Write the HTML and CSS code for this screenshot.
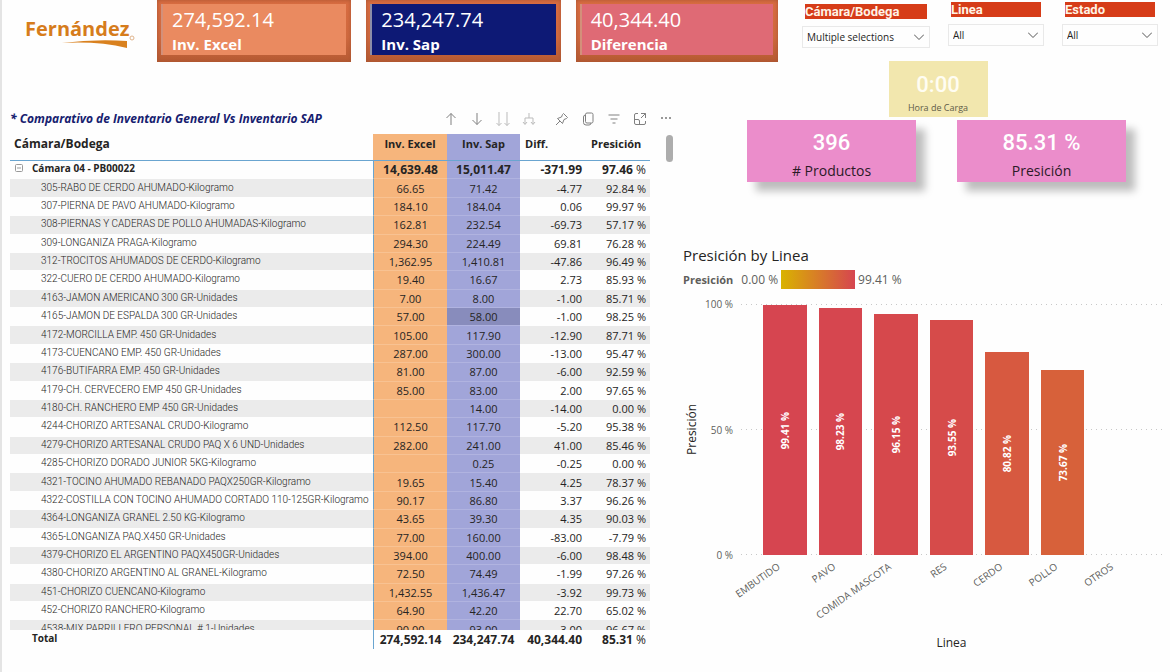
FILE: index.html
```html
<!DOCTYPE html>
<html lang="es">
<head>
<meta charset="utf-8">
<title>Comparativo de Inventario</title>
<link rel="stylesheet" href="styles.css">
</head>
<body>
<div class="report">
  <header class="top">
    <div class="logo">
      <span class="logo-name">Fernández</span>
      <svg class="logo-swoosh" viewBox="0 0 72 8" aria-hidden="true"><path d="M0 3Q32-1 65 1V8Q36 1 0 3Z" fill="#d9811f"/><circle cx="70" cy="-2" r="2" fill="none" stroke="#e0b48c"/></svg>
    </div>
    <div class="kpis">
      <section class="kpi kpi-excel"><div class="kpi-face"><span class="kpi-value">274,592.14</span><span class="kpi-label">Inv. Excel</span></div></section>
      <section class="kpi kpi-sap"><div class="kpi-face"><span class="kpi-value">234,247.74</span><span class="kpi-label">Inv. Sap</span></div></section>
      <section class="kpi kpi-diff"><div class="kpi-face"><span class="kpi-value">40,344.40</span><span class="kpi-label">Diferencia</span></div></section>
    </div>
    <div class="slicers">
      <div class="slicer slicer-wide">
        <label for="camara">Cámara/Bodega</label>
        <div class="drop"><select id="camara"><option>Multiple selections</option></select><svg viewBox="0 0 10 6" aria-hidden="true"><path d="M0 .5L5 5.5L10 .5"/></svg></div>
      </div>
      <div class="slicer">
        <label for="linea">Linea</label>
        <div class="drop"><select id="linea"><option>All</option></select><svg viewBox="0 0 10 6" aria-hidden="true"><path d="M0 .5L5 5.5L10 .5"/></svg></div>
      </div>
      <div class="slicer">
        <label for="estado">Estado</label>
        <div class="drop"><select id="estado"><option>All</option></select><svg viewBox="0 0 10 6" aria-hidden="true"><path d="M0 .5L5 5.5L10 .5"/></svg></div>
      </div>
    </div>
  </header>

  <main class="panes">
    <section class="matrix">
      <div class="matrix-head">
        <h1>* Comparativo de Inventario General Vs Inventario SAP</h1>
        <div class="tools">
          <button aria-label="Subir nivel"><svg viewBox="0 0 14 14"><path d="M7 13V1.500M2.500 6L7 1.500L11.500 6"/></svg></button>
          <button aria-label="Bajar nivel"><svg viewBox="0 0 14 14"><path d="M7 1V12.500M2.500 8L7 12.500L11.500 8"/></svg></button>
          <button class="off" aria-label="Siguiente nivel"><svg viewBox="0 0 14 14"><path d="M3 0V13.500M.5 11L3 13.500L5.500 11M11 0V13.500M8.500 11L11 13.500L13.500 11"/></svg></button>
          <button class="off" aria-label="Expandir nivel"><svg viewBox="0 0 14 14"><path d="M7 1V6M3 12V6H11V12M1 10L3 12.500L5 10M9 10L11 12.500L13 10"/></svg></button>
          <button class="gap" aria-label="Anclar"><svg viewBox="0 0 14 14"><path d="M8.500 1.500L12.500 5.500L11.500 6.500L9 7.500L7.500 11.500L2.500 6.500L6.500 5L7.500 2.500ZM5 9L1 13"/></svg></button>
          <button aria-label="Copiar"><svg viewBox="0 0 14 14"><rect x="4.500" y="1" width="7.500" height="10" rx="1.500"/><path d="M4.500 3Q2.500 3 2.500 5V10.500Q2.500 13 5 13H8Q10 13 10 11"/></svg></button>
          <button aria-label="Filtros"><svg viewBox="0 0 14 14"><path d="M1.500 3H12.500M3.500 7H10.500M5.500 11H8.500"/></svg></button>
          <button aria-label="Modo de enfoque"><svg viewBox="0 0 14 14"><path d="M5 1.500H3Q1.500 1.500 1.500 3V11Q1.500 12.500 3 12.500H11Q12.500 12.500 12.500 11V9M8 1.500H12.500V6M12.500 1.500L8 6M1.500 7.500H5Q6.500 7.500 6.500 9V12.500"/></svg></button>
          <button class="more" aria-label="Más opciones"><svg viewBox="0 0 14 14"><circle cx="3" cy="6" r="1"/><circle cx="7" cy="6" r="1"/><circle cx="11" cy="6" r="1"/></svg></button>
        </div>
      </div>
      <div class="matrix-body">
        <div class="scroller">
          <table>
            <colgroup><col><col class="c-excel"><col class="c-sap"><col class="c-diff"><col class="c-pres"></colgroup>
            <thead><tr><th>Cámara/Bodega</th><th>Inv. Excel</th><th>Inv. Sap</th><th>Diff.</th><th>Presición</th></tr></thead>
            <tbody>
              <tr class="group"><th><button class="toggle" aria-label="Contraer"><svg viewBox="0 0 8 8"><rect x=".5" y=".5" width="7" height="7" rx="1"/><path d="M2 4H6"/></svg></button>Cámara 04 - PB00022</th><td>14,639.48</td><td>15,011.47</td><td>-371.99</td><td>97.46 <i>%</i></td></tr>
              <tr><th>305-RABO DE CERDO AHUMADO-Kilogramo</th><td>66.65</td><td>71.42</td><td>-4.77</td><td>92.84 %</td></tr>
              <tr><th>307-PIERNA DE PAVO AHUMADO-Kilogramo</th><td>184.10</td><td>184.04</td><td>0.06</td><td>99.97 %</td></tr>
              <tr><th>308-PIERNAS Y CADERAS DE POLLO AHUMADAS-Kilogramo</th><td>162.81</td><td>232.54</td><td>-69.73</td><td>57.17 %</td></tr>
              <tr><th>309-LONGANIZA PRAGA-Kilogramo</th><td>294.30</td><td>224.49</td><td>69.81</td><td>76.28 %</td></tr>
              <tr><th>312-TROCITOS AHUMADOS DE CERDO-Kilogramo</th><td>1,362.95</td><td>1,410.81</td><td>-47.86</td><td>96.49 %</td></tr>
              <tr><th>322-CUERO DE CERDO AHUMADO-Kilogramo</th><td>19.40</td><td>16.67</td><td>2.73</td><td>85.93 %</td></tr>
              <tr><th>4163-JAMON AMERICANO 300 GR-Unidades</th><td>7.00</td><td>8.00</td><td>-1.00</td><td>85.71 %</td></tr>
              <tr><th>4165-JAMON DE ESPALDA 300 GR-Unidades</th><td>57.00</td><td class="hover">58.00</td><td>-1.00</td><td>98.25 %</td></tr>
              <tr><th>4172-MORCILLA EMP. 450 GR-Unidades</th><td>105.00</td><td>117.90</td><td>-12.90</td><td>87.71 %</td></tr>
              <tr><th>4173-CUENCANO EMP. 450 GR-Unidades</th><td>287.00</td><td>300.00</td><td>-13.00</td><td>95.47 %</td></tr>
              <tr><th>4176-BUTIFARRA EMP. 450 GR-Unidades</th><td>81.00</td><td>87.00</td><td>-6.00</td><td>92.59 %</td></tr>
              <tr><th>4179-CH. CERVECERO EMP 450 GR-Unidades</th><td>85.00</td><td>83.00</td><td>2.00</td><td>97.65 %</td></tr>
              <tr><th>4180-CH. RANCHERO EMP 450 GR-Unidades</th><td></td><td>14.00</td><td>-14.00</td><td>0.00 %</td></tr>
              <tr><th>4244-CHORIZO ARTESANAL CRUDO-Kilogramo</th><td>112.50</td><td>117.70</td><td>-5.20</td><td>95.38 %</td></tr>
              <tr><th>4279-CHORIZO ARTESANAL CRUDO PAQ X 6 UND-Unidades</th><td>282.00</td><td>241.00</td><td>41.00</td><td>85.46 %</td></tr>
              <tr><th>4285-CHORIZO DORADO JUNIOR 5KG-Kilogramo</th><td></td><td>0.25</td><td>-0.25</td><td>0.00 %</td></tr>
              <tr><th>4321-TOCINO AHUMADO REBANADO PAQX250GR-Kilogramo</th><td>19.65</td><td>15.40</td><td>4.25</td><td>78.37 %</td></tr>
              <tr><th>4322-COSTILLA CON TOCINO AHUMADO CORTADO 110-125GR-Kilogramo</th><td>90.17</td><td>86.80</td><td>3.37</td><td>96.26 %</td></tr>
              <tr><th>4364-LONGANIZA GRANEL 2.50 KG-Kilogramo</th><td>43.65</td><td>39.30</td><td>4.35</td><td>90.03 %</td></tr>
              <tr><th>4365-LONGANIZA PAQ.X450 GR-Unidades</th><td>77.00</td><td>160.00</td><td>-83.00</td><td>-7.79 %</td></tr>
              <tr><th>4379-CHORIZO EL ARGENTINO PAQX450GR-Unidades</th><td>394.00</td><td>400.00</td><td>-6.00</td><td>98.48 %</td></tr>
              <tr><th>4380-CHORIZO ARGENTINO AL GRANEL-Kilogramo</th><td>72.50</td><td>74.49</td><td>-1.99</td><td>97.26 %</td></tr>
              <tr><th>451-CHORIZO CUENCANO-Kilogramo</th><td>1,432.55</td><td>1,436.47</td><td>-3.92</td><td>99.73 %</td></tr>
              <tr><th>452-CHORIZO RANCHERO-Kilogramo</th><td>64.90</td><td>42.20</td><td>22.70</td><td>65.02 %</td></tr>
              <tr><th>4538-MIX PARRILLERO PERSONAL # 1-Unidades</th><td>90.00</td><td>93.00</td><td>-3.00</td><td>96.67 %</td></tr>
            </tbody>
            <tfoot><tr><th>Total</th><td>274,592.14</td><td>234,247.74</td><td>40,344.40</td><td>85.31 <i>%</i></td></tr></tfoot>
          </table>
        </div>
        <div class="track"><div class="thumb"></div></div>
      </div>
    </section>

    <section class="side">
      <div class="clock"><div class="clock-card"><span class="clock-value">0:00</span><span class="clock-label">Hora de Carga</span></div></div>
      <div class="stats">
        <div class="stat"><span class="stat-value">396</span><span class="stat-label"># Productos</span></div>
        <div class="stat"><span class="stat-value">85.31 %</span><span class="stat-label">Presición</span></div>
      </div>
      <figure class="chart">
        <h2>Presición by Linea</h2>
        <div class="legend"><b>Presición</b><span>0.00 %</span><span class="ramp"></span><span>99.41 %</span></div>
        <div class="plot-area">
          <div class="y-title"><span>Presición</span></div>
          <div class="ticks"><span>100 %</span><span>50 %</span><span>0 %</span></div>
          <div class="plot">
            <div class="lines"><span></span><span></span><span></span></div>
            <div class="bars">
              <div class="bar" style="height:99.41%;background:#d64550"><span>99.41 %</span></div>
              <div class="bar" style="height:98.23%;background:#d6464f"><span>98.23 %</span></div>
              <div class="bar" style="height:96.15%;background:#d6484c"><span>96.15 %</span></div>
              <div class="bar" style="height:93.55%;background:#d64b4a"><span>93.55 %</span></div>
              <div class="bar" style="height:80.82%;background:#d75940"><span>80.82 %</span></div>
              <div class="bar" style="height:73.67%;background:#d7613a"><span>73.67 %</span></div>
              <div class="bar" style="height:0%"></div>
            </div>
          </div>
          <div class="cats"><div><span>EMBUTIDO</span></div><div><span>PAVO</span></div><div><span>COMIDA MASCOTA</span></div><div><span>RES</span></div><div><span>CERDO</span></div><div><span>POLLO</span></div><div><span>OTROS</span></div></div>
          <div class="x-title">Linea</div>
        </div>
      </figure>
    </section>
  </main>
</div>
</body>
</html>
```
FILE: styles.css
```css
* { box-sizing: border-box; }
body { margin: 0; background: #fefefe; color: #252423; font-family: "Open Sans", "Noto Sans", sans-serif; font-size: 11px; }
button { border: 0; padding: 0; background: none; }
h1, h2, figure { margin: 0; }
.report { min-height: 100vh; border-left: 2px solid #e4e4e4; }

/* Header */
.top { display: flex; }
.logo { flex: none; width: 155px; padding: 14px 0 0 23px; }
.logo-name { display: block; color: #d67c1c; font: 700 20px/30px "Open Sans", sans-serif; }
.logo-swoosh { display: block; width: 72px; height: 8px; margin: -4px 0 0 37px; overflow: visible; }
.kpis { flex: 621; display: flex; gap: 15px; }
.kpi { flex: 185; height: 62px; padding: 4px 5px 7px 4px; background: linear-gradient(#da6d42, #d06a3f 60%, #b65a33); box-shadow: inset 0 0 4px #a85430; }
.kpi-diff { flex: 193; }
.kpi-face { height: 51px; padding: 3px 0 0 9px; border-left: 2px solid #d3907a; color: #fff; }
.kpi-excel .kpi-face { background: #ea8a60; }
.kpi-sap .kpi-face { background: #0d1975; border-color: #8c8da8; }
.kpi-diff .kpi-face { background: #df6a75; }
.kpi-value, .kpi-label { display: block; }
.kpi-value { font-size: 20px; line-height: 26px; }
.kpi-label { font-size: 15px; font-weight: 700; line-height: 22px; }

.slicers { flex: 356; display: flex; gap: 18px; padding: 2px 12px 0 24px; }
.slicer { flex: 96; min-width: 0; }
.slicer-wide { flex: 128; padding-top: 2px; }
.slicer label { display: block; height: 15px; margin: 0 3px 7px; background: #d63c18; color: #fff3e6; font: 700 13px/15px Roboto, sans-serif; }
.drop { display: grid; align-items: center; border: 1px solid #e9e9e9; height: 22px; }
.drop select { grid-area: 1 / 1; appearance: none; width: 100%; padding: 0 0 0 4px; border: 0; background: none; color: #252423; font: 10px/20px "Open Sans", sans-serif; }
.drop svg { grid-area: 1 / 1; justify-self: end; width: 10px; height: 6px; margin-right: 5px; fill: none; stroke: #555; pointer-events: none; }

.panes { display: grid; grid-template-columns: minmax(0, 677fr) minmax(0, 491fr); }

/* Matrix */
.matrix { padding: 43px 0 0 8px; }
.matrix-head { display: flex; justify-content: space-between; align-items: center; height: 28px; }
.matrix h1 { color: #16206f; font-size: 12px; font-style: italic; font-weight: 700; line-height: 18px; white-space: nowrap; }
.tools { display: flex; }
.tools button { width: 26px; height: 14px; }
.tools .gap { margin-left: 7px; }
.tools svg { display: block; width: 14px; height: 14px; margin: 0 auto; fill: none; stroke: #808080; stroke-width: 1; }
.tools .off svg { stroke: #bbb; }
.tools .more svg { fill: #777; stroke: none; }
.matrix-body { display: flex; padding-top: 1px; }
.scroller { flex: 1; height: 515px; overflow: auto; scrollbar-width: none; }
.track { flex: none; width: 29px; padding: 1px 6px 0 16px; }
.thumb { height: 27px; border-radius: 4px; background: #adadad; }

table { width: 100%; height: 524px; table-layout: fixed; border-collapse: separate; border-spacing: 0; }
.c-excel { width: 74px; }
.c-sap { width: 73px; }
.c-diff { width: 68px; }
.c-pres { width: 62px; }
th, td { padding: 0; white-space: nowrap; text-align: center; }
th:first-child { text-align: left; font-weight: 400; }
thead th { position: sticky; top: 0; height: 27px; padding-bottom: 7px; border-bottom: 1px solid #6aa5d0; background: #fefefe; font-size: 11px; font-weight: 700; line-height: 18px; }
thead th:first-child { padding-left: 4px; font-size: 12px; font-weight: 700; }
thead th:nth-child(2), tbody td:nth-child(2) { background: #f6b57c; }
thead th:nth-child(3), tbody td:nth-child(3) { background: #a1a5d9; }
thead th:nth-child(4) { padding-left: 5px; text-align: left; }
thead th:nth-child(5) { padding-left: 3px; text-align: left; }
tbody th, tbody td { line-height: 17px; border-bottom: 1px solid #fefefe; }
tbody th:first-child { padding: 0 0 2px 31px; font: 300 10px/15px Roboto, sans-serif; }
tbody td:nth-child(2) { border-color: #f8c292; }
tbody td:nth-child(3) { border-color: #b0b3e0; }
tbody tr:nth-child(even) { background: #ebebeb; }
tbody td:nth-child(2), tfoot td:nth-child(2) { border-left: 1px solid #6aa5d0; }
td:nth-child(4) { padding-right: 6px; text-align: right; }
td:nth-child(5) { padding-right: 4px; text-align: right; }
tbody td.hover { background: #888cbc; }
.group td, tfoot td { font-size: 12px; font-weight: 700; }
td i { font-style: normal; font-weight: 400; }
tbody .group th:first-child { padding-left: 5px; font: 700 10px/15px "Open Sans", sans-serif; }
.toggle { width: 8px; height: 8px; margin-right: 9px; }
.toggle svg { display: block; width: 8px; height: 8px; fill: none; stroke: #999; }
tfoot th, tfoot td { position: sticky; bottom: 0; height: 19px; background: #fefefe; line-height: 18px; }
tfoot th:first-child { padding-left: 22px; padding-bottom: 3px; font-size: 10px; font-weight: 700; line-height: 15px; }

/* Cards */
.clock { display: flex; justify-content: center; padding-left: 27px; margin-top: -1px; }
.clock-card { width: 99px; height: 56px; padding-top: 11px; background: #f2e7ae; text-align: center; }
.clock-value, .clock-label, .stat-value, .stat-label { display: block; }
.clock-value { color: #fffdf2; font: 500 22px/26px Roboto, sans-serif; }
.clock-label { color: #605c48; font-size: 9px; line-height: 20px; }
.stats { display: flex; gap: 41px; margin: 3px 44px 0 68px; }
.stat { flex: 1; height: 62px; padding-top: 10px; background: #eb8dcb; box-shadow: 9px 9px 8px #bdbdbd; text-align: center; }
.stat-value { color: #fff; font: 500 22px/26px Roboto, sans-serif; }
.stat-label { color: #2b1a27; font-size: 14px; line-height: 30px; }

/* Chart */
.chart { padding: 63px 8px 0 4px; }
.chart h2 { font: 400 15px/20px "Open Sans", sans-serif; }
.legend { display: flex; align-items: center; margin-top: 5px; height: 19px; color: #605e5c; font-size: 12px; }
.legend b { margin-right: 8px; font-size: 11px; }
.ramp { width: 74px; height: 19px; margin: 0 3px; background: linear-gradient(90deg, #d9b300, #d64550); }
.plot-area { display: grid; grid-template-columns: 15px 35px minmax(0, 1fr); column-gap: 4px; margin-top: 15px; }
.y-title { display: grid; place-items: center; }
.y-title span { writing-mode: vertical-rl; rotate: 180deg; font-size: 12px; }
.ticks { display: flex; flex-direction: column; justify-content: space-between; margin: -8px 0; color: #605e5c; font-size: 10px; line-height: 16px; text-align: right; }
.ticks span { margin-right: 4px; }
.plot { display: grid; height: 251px; }
.lines, .bars { grid-area: 1 / 1; }
.lines { display: flex; flex-direction: column; justify-content: space-between; }
.lines span { height: 1px; background: repeating-linear-gradient(90deg, #c8c8c8 0 1px, transparent 1px 5px); }
.bars { display: flex; align-items: flex-end; gap: 12px; padding: 0 22px; }
.bar { flex: 1; display: grid; place-items: center; }
.bar span { writing-mode: vertical-rl; rotate: 180deg; color: #fff; font: 700 10px/14px "Open Sans", sans-serif; }
.cats { display: grid; grid-template-columns: repeat(7, minmax(0, 1fr)); grid-column: 3; height: 72px; padding: 3px 16px 0; color: #605e5c; }
.cats div { display: flex; justify-content: flex-end; padding-right: 34px; }
.cats span { height: 14px; font-size: 10px; line-height: 14px; white-space: nowrap; transform-origin: right center; rotate: -35deg; }
.x-title { grid-column: 3; font-size: 12px; line-height: 32px; text-align: center; }
```
